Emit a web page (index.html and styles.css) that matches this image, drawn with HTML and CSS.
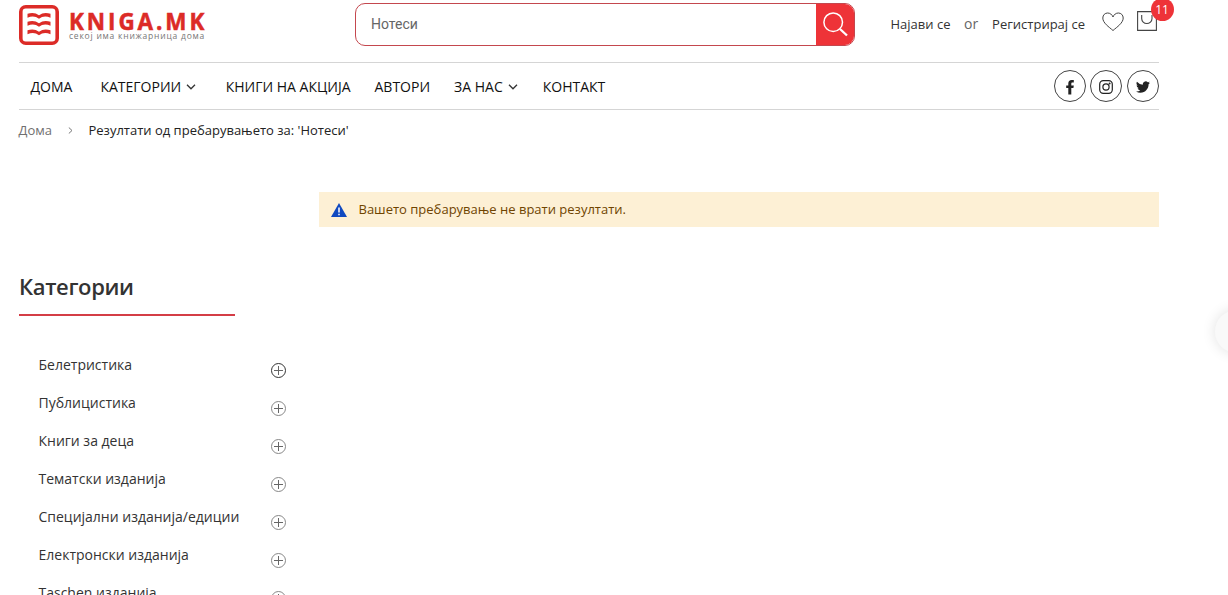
FILE: index.html
```html
<!DOCTYPE html>
<html lang="mk">
<head>
<meta charset="utf-8">
<title>Kniga.mk</title>
<link rel="stylesheet" href="styles.css">
</head>
<body>
<div class="page">
  <header class="header">
    <a class="logo">
      <svg class="logo-mark" width="40" height="40" viewBox="0 0 40 40">
        <rect x="1.800" y="1.800" width="36.400" height="36.400" rx="5" fill="none" stroke="#dc2b27" stroke-width="3.600"/>
        <g fill="#dc2b27"><path d="M8.500 8.800Q15 6.500 20 10.200Q25 6.500 31.500 8.800V12.800Q25 10 20 13.800Q15 10 8.500 12.800Z"/><path d="M8.500 16.800Q15 14.500 20 18.200Q25 14.500 31.500 16.800V20.800Q25 18 20 21.800Q15 18 8.500 20.800Z"/><path d="M8.500 25.300Q15 23 20 26.700Q25 23 31.500 25.300V29.300Q25 26.500 20 30.300Q15 26.500 8.500 29.300Z"/></g>
      </svg>
      <span class="logo-words"><span class="logo-name">KNIGA.MK</span><span class="logo-tag">секој има книжарница дома</span></span>
    </a>
    <form class="search">
      <span class="search-text">Нотеси</span>
      <span class="search-button"><svg width="25" height="25" viewBox="0 0 25 25" fill="none" stroke="#fff"><circle cx="10.200" cy="10.200" r="9.300" stroke-width="1.500"/><path d="M17 17L24 23.500" stroke-width="2.300"/></svg></span>
    </form>
    <div class="account">
      <a class="login">Најави се</a><span class="or">or</span><a class="register">Регистрирај се</a>
      <svg class="heart" width="22" height="20" viewBox="0 0 22 20" fill="none" stroke="#444" stroke-width="1"><path d="M11 18.500C7 15 .8 11 .8 6C.8 3 3 1 5.600 1C8 1 10.100 2.500 11 5C11.900 2.500 14 1 16.400 1C19 1 21.200 3 21.200 6C21.200 11 15 15 11 18.500Z"/></svg>
      <span class="cart"><svg width="20" height="20" viewBox="0 0 20 20" fill="none" stroke="#444" stroke-width="1.100"><path d="M.6.600H19.400V19.400H.6ZM4.700 4V7.500C4.700 10.500 7 12.500 9.800 12.500S15 10.500 15 7.500V4"/></svg><b class="count">11</b></span>
    </div>
  </header>
  <nav class="nav">
    <a class="n-home">ДОМА</a>
    <a class="n-cat">КАТЕГОРИИ</a><svg class="chev" width="10" height="6" viewBox="0 0 10 6"><path d="M1 .8L5 4.800L9 .8"/></svg>
    <a class="n-sale">КНИГИ НА АКЦИЈА</a>
    <a class="n-auth">АВТОРИ</a>
    <a class="n-about">ЗА НАС</a><svg class="chev" width="10" height="6" viewBox="0 0 10 6"><path d="M1 .8L5 4.800L9 .8"/></svg>
    <a class="n-contact">КОНТАКТ</a>
    <div class="social">
      <a><svg width="16" height="16" viewBox="0 0 16 16"><path fill="#222" d="M6.300 15.500V9H4.200V6.400H6.300V4.500C6.300 2.100 7.500.9 9.700.9H11.800V3.500H10.500C9.600 3.500 9.300 3.900 9.300 4.700V6.400H11.800L11.400 9H9.300V15.500Z"/></svg></a>
      <a><svg width="16" height="16" viewBox="0 0 16 16" fill="none" stroke="#222" stroke-width="1.200"><rect x="1.700" y="1.700" width="12.600" height="12.600" rx="3.600"/><circle cx="8" cy="8" r="3.100"/><circle cx="11.600" cy="4.400" r=".4"/></svg></a>
      <a><svg width="14" height="14" viewBox="0 0 24 24"><path fill="#222" d="M24 4.560a10 10 0 0 1-2.830.78 5 5 0 0 0 2.160-2.730 10 10 0 0 1-3.120 1.200 4.920 4.920 0 0 0-8.390 4.480A14 14 0 0 1 1.670 3.150a4.930 4.930 0 0 0 1.530 6.570 5 5 0 0 1-2.230-.62 4.930 4.930 0 0 0 3.950 4.890 5 5 0 0 1-2.220.08 4.930 4.930 0 0 0 4.600 3.420A9.900 9.900 0 0 1 0 19.540a14 14 0 0 0 7.550 2.210c9.140 0 14.310-7.720 13.980-14.640A10 10 0 0 0 24 4.560z"/></svg></a>
    </div>
  </nav>
  <div class="crumbs"><a>Дома</a><svg width="5" height="7" viewBox="0 0 5 7"><path d="M.8.500L4 3.500L.8 6.500" fill="none" stroke="#777"/></svg><span>Резултати од пребарувањето за: 'Нотеси'</span></div>
  <div class="notice"><svg width="16" height="14" viewBox="0 0 16 14"><path fill="#1049c0" d="M8 0L16 14H0Z"/><path stroke="#fff" stroke-width="1.500" d="M8 4.500V9.500M8 10.800V12.300"/></svg><span>Вашето пребарување не врати резултати.</span></div>
  <aside class="sidebar">
    <h2>Категории</h2>
    <ul class="cats">
      <li class="active"><span>Белетристика</span><i class="plus"></i></li>
      <li><span>Публицистика</span><i class="plus"></i></li>
      <li><span>Книги за деца</span><i class="plus"></i></li>
      <li><span>Тематски изданија</span><i class="plus"></i></li>
      <li><span>Специјални изданија/едиции</span><i class="plus"></i></li>
      <li><span>Електронски изданија</span><i class="plus"></i></li>
      <li><span>Taschen изданија</span><i class="plus"></i></li>
    </ul>
  </aside>
</div>
<div class="float-tab"></div>
</body>
</html>
```
FILE: styles.css
```css
* { box-sizing: border-box; }
html, body { height: 100%; }
body { margin: 0; overflow: hidden; background: #fff; color: #333; font-family: "Open Sans", "Noto Sans", sans-serif; font-size: 13px; }
svg { display: block; flex: none; }
a, span { white-space: nowrap; }
.page { width: 1140px; margin-left: 19px; }

.header { display: flex; height: 62px; align-items: flex-start; }
.logo { display: flex; width: 336px; padding-top: 5px; }
.logo-words { display: flex; flex-direction: column; margin-left: 10px; padding-top: 8px; }
.logo-name { font: 700 22.5px/18px "Open Sans", sans-serif; letter-spacing: 2.9px; color: #dc2b27; -webkit-text-stroke: .5px #dc2b27; }
.logo-tag { font-size: 8.5px; line-height: 9px; letter-spacing: .78px; color: #777; }
.search { display: flex; width: 500px; height: 43px; margin: 3px 0 0; border: 1px solid #c4474e; border-radius: 10px; overflow: hidden; }
.search-text { flex: 1; padding-left: 15px; font: 14px/40px Roboto, sans-serif; color: #666; }
.search-button { display: flex; width: 39px; margin: -1px; height: 43px; align-items: center; justify-content: center; background: #ee3338; }
.account { display: flex; flex: 1; padding: 12px 0 0 35.5px; line-height: 24px; }
.or { margin: 0 14px 0 13.5px; font-size: 14px; color: #666; }
.heart { margin: 0 0 0 16.5px; }
.cart { position: relative; margin: -1px 0 0 13px; }
.count { position: absolute; left: 14px; top: -13px; width: 23px; height: 23px; border-radius: 50%; background: #ee3338; color: #fff; font: 12px/23px "Open Sans", sans-serif; text-align: center; }

.nav { display: flex; height: 48px; align-items: center; padding-left: 11.5px; border-top: 1px solid #d5d5d5; border-bottom: 1px solid #d5d5d5; font-size: 14px; color: #111; line-height: 20px; }
.nav > a { padding-top: 2px; }
.nav .chev { margin-left: 5px; margin-top: 2px; fill: none; stroke: #333; stroke-width: 1.3; }
.n-cat { margin-left: 28px; }
.n-sale { margin-left: 29.5px; }
.n-auth, .n-about { margin-left: 24px; }
.n-contact { margin-left: 25px; }
.social { display: flex; gap: 4px; margin-left: auto; }
.social a { display: flex; width: 32px; height: 32px; padding-top: 2px; border: 1px solid #444; border-radius: 50%; align-items: center; justify-content: center; }
.social a:last-child { margin-left: 1px; }

.crumbs { display: flex; height: 39px; align-items: center; color: #222; margin-left: -.5px; }
.crumbs a { color: #707070; }
.crumbs svg { margin: 2px 15px 0 16.5px; }
.notice { display: flex; align-items: center; height: 35px; margin: 43px 0 0 300px; padding: 0 0 1px 12px; background: #fdf0d5; color: #6f4400; }
.notice span { margin-left: 11.5px; }
.notice svg { margin-top: 1px; }

.sidebar { width: 276px; padding-top: 43px; }
.sidebar h2 { width: 216px; height: 46px; margin: 0; border-bottom: 2px solid #d43d46; font-size: 22px; line-height: 32px; font-weight: 600; letter-spacing: -.35px; }
.cats { list-style: none; margin: 30px 0 0; padding: 0 9px 0 19.5px; }
.cats li { display: flex; justify-content: space-between; height: 38px; font-size: 14px; line-height: 38px; }
.plus { width: 15px; height: 15px; margin-top: 17px; border: 1px solid #888; border-radius: 50%; background: linear-gradient(#666, #666) center / 9px 1px no-repeat, linear-gradient(#666, #666) center / 1px 9px no-repeat; }
.active .plus { border-color: #333; }

.float-tab { position: fixed; left: 1215px; top: 310px; width: 43px; height: 43px; border-radius: 50%; background: #f9f9f9; box-shadow: 0 0 14px rgba(0, 0, 0, .12); }
```
